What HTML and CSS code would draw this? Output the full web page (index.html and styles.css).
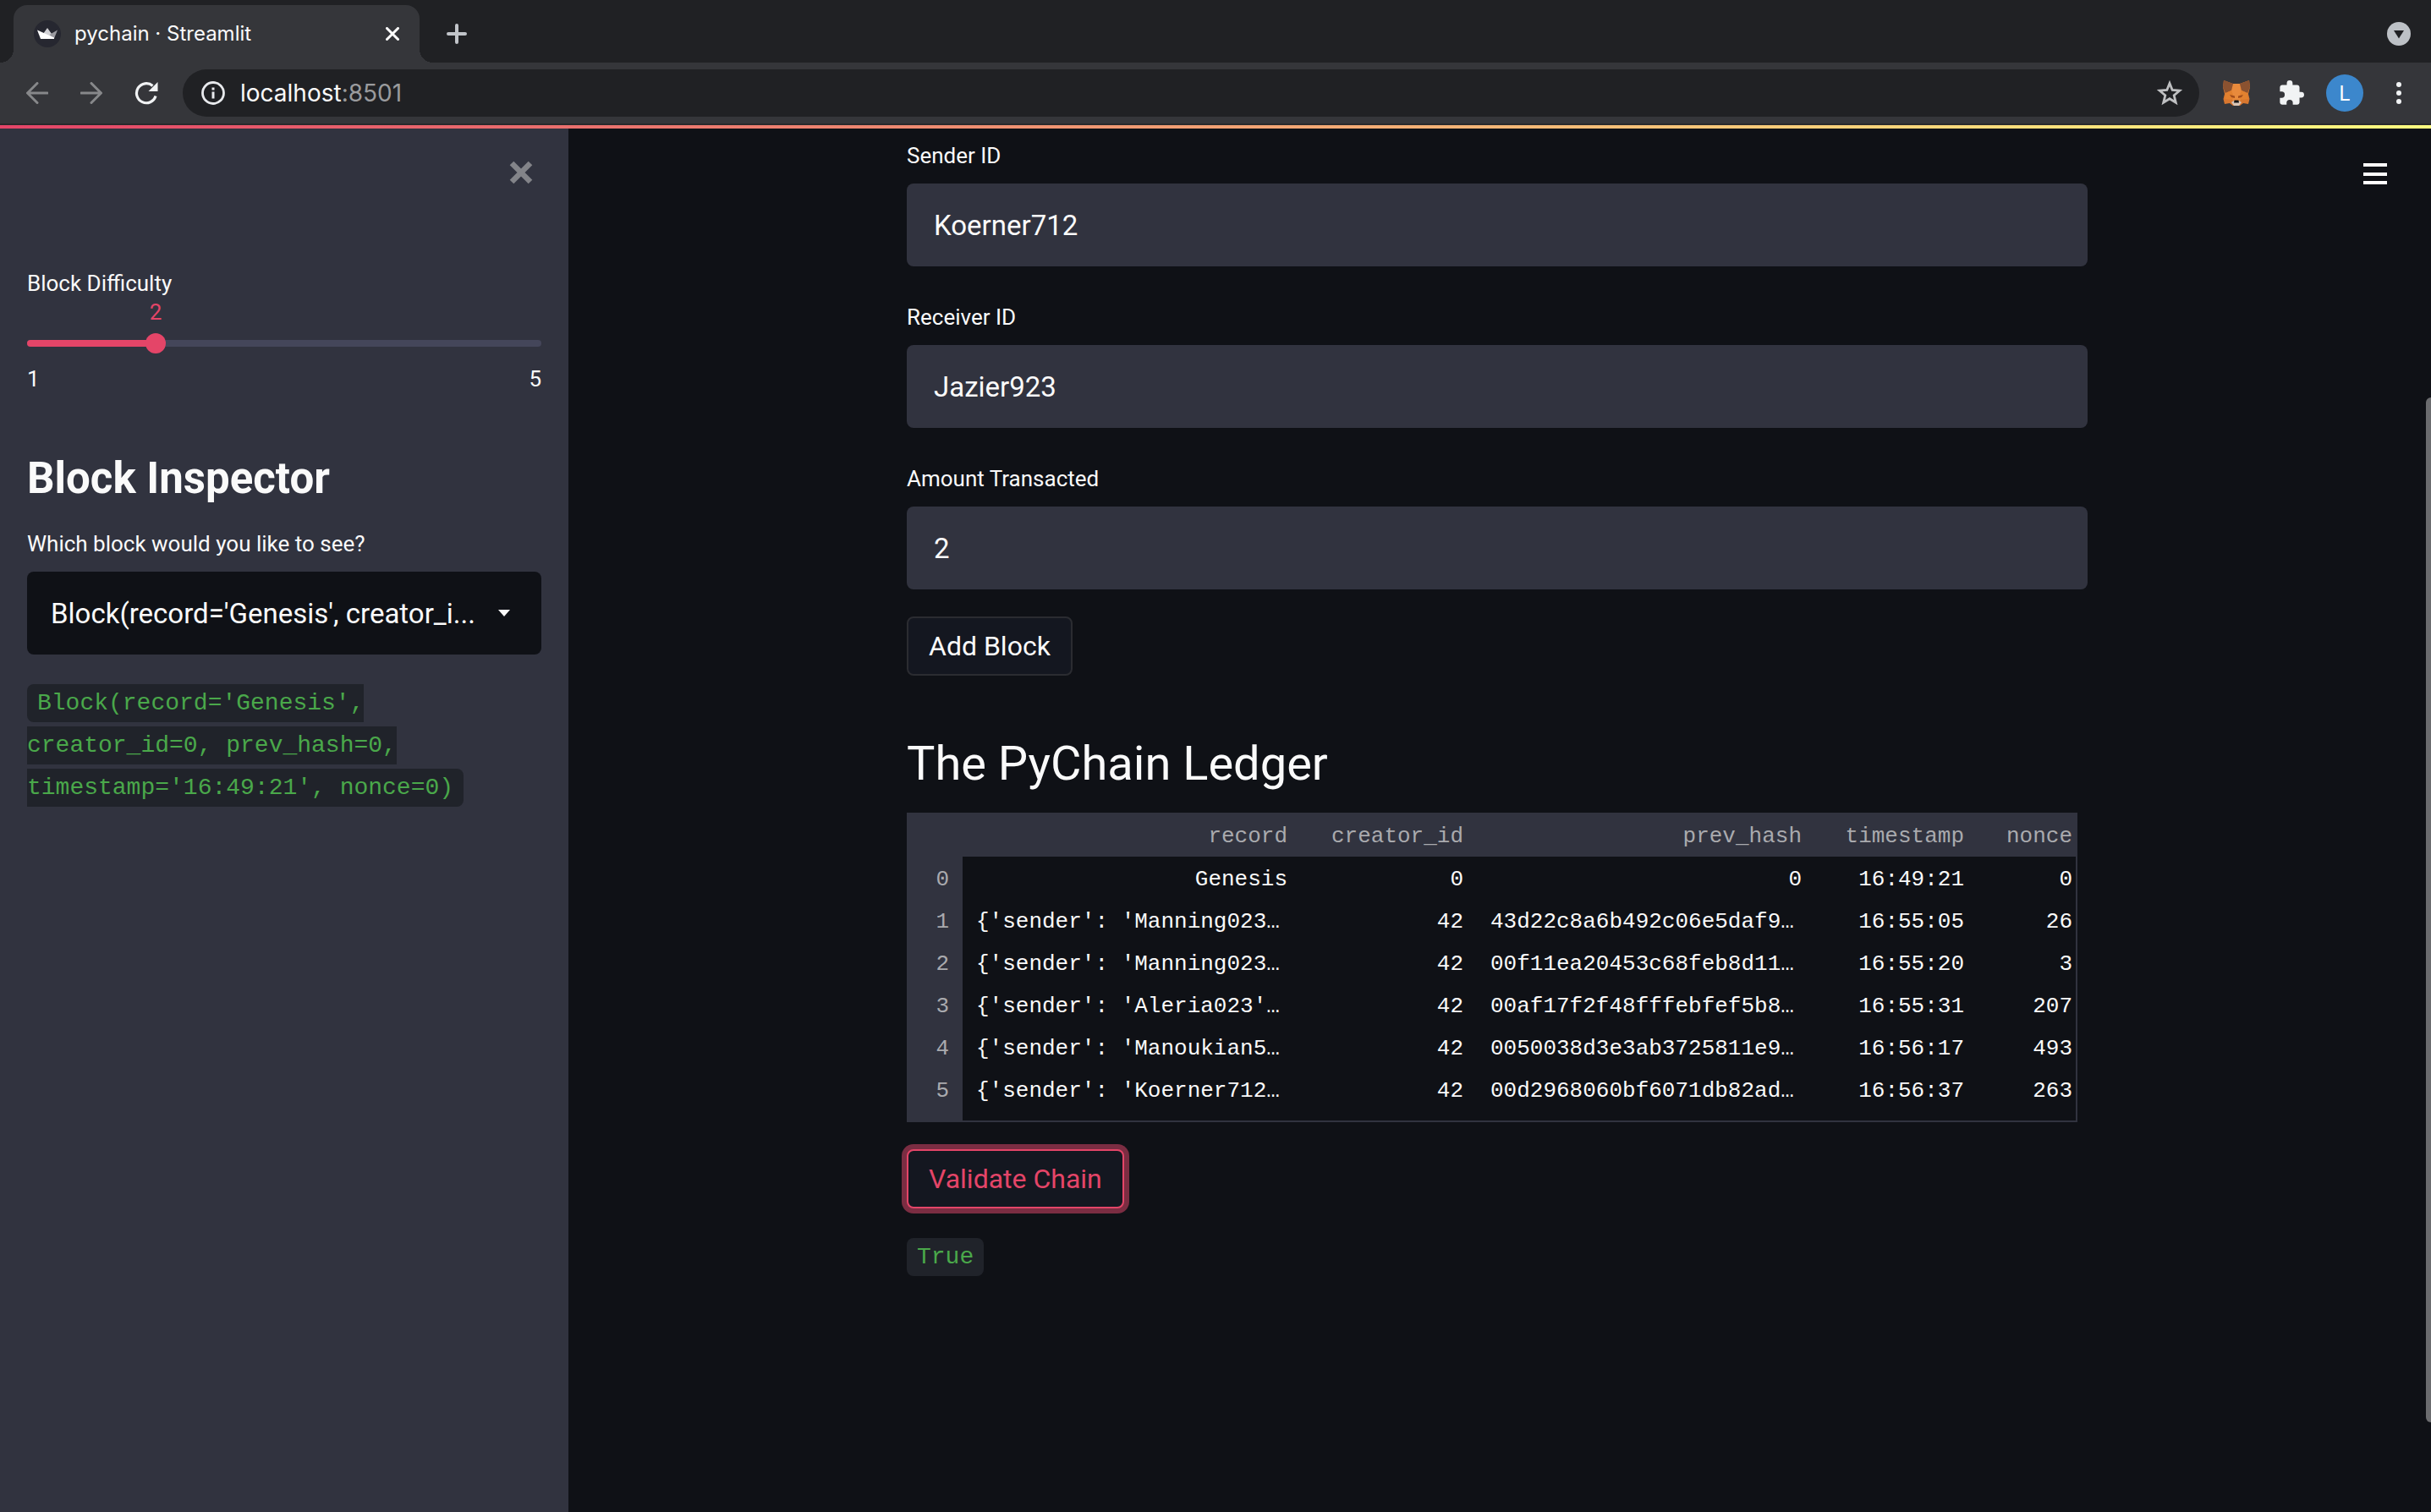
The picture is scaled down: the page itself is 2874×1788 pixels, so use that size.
FILE: index.html
```html
<!DOCTYPE html>
<html lang="en">
<head>
<meta charset="utf-8">
<title>pychain · Streamlit</title>
<link rel="stylesheet" href="styles.css">
</head>
<body>
<header class="browser">
  <div class="tabstrip">
    <div class="tab">
      <svg class="favicon" viewBox="0 0 32 32" aria-hidden="true">
        <circle cx="16" cy="16" r="16" fill="#262730"/>
        <path d="M11 16l5-7 5 7 1 4z" fill="#d2d2d6"/>
        <path d="M28 11.500L18.500 17l4.500 4.500h1z" fill="#9a9aa0"/>
        <path d="M4 11.500L24 20.500V22H8z" fill="#fff"/>
      </svg>
      <span class="tab-title">pychain · Streamlit</span>
      <button class="icon-button" aria-label="Close tab">
        <svg width="16" height="16" viewBox="0 0 16 16"><path d="M1.500 1.500l13 13M14.500 1.500l-13 13" stroke="#fff" stroke-width="3" stroke-linecap="round"/></svg>
      </button>
    </div>
    <button class="icon-button new-tab" aria-label="New tab">
      <svg width="24" height="24" viewBox="0 0 24 24"><path d="M12 2v20M2 12h20" stroke="#c1c4c9" stroke-width="4" stroke-linecap="round"/></svg>
    </button>
    <button class="icon-button tab-search" aria-label="Search tabs">
      <svg width="28" height="28" viewBox="0 0 28 28"><circle cx="14" cy="14" r="14" fill="#bdc1c6"/><path d="M8 10h12l-6 9.500z" fill="#202124"/></svg>
    </button>
  </div>
  <div class="toolbar">
    <div class="nav-buttons">
      <button class="icon-button" aria-label="Back"><svg width="26" height="26" viewBox="0 0 26 26" fill="none" stroke="#87888a" stroke-width="3" stroke-linecap="round" stroke-linejoin="round"><path d="M25 13H2M13 1.500L1.500 13 13 24.500"/></svg></button>
      <button class="icon-button" aria-label="Forward"><svg width="26" height="26" viewBox="0 0 26 26" fill="none" stroke="#87888a" stroke-width="3" stroke-linecap="round" stroke-linejoin="round"><path d="M1 13h23M13 1.500L24.500 13 13 24.500"/></svg></button>
      <button class="icon-button" aria-label="Reload"><svg width="28" height="28" viewBox="0 0 28 28"><path d="M21.500 5.500A11.500 11.500 0 1 0 25 17.500" fill="none" stroke="#f1f3f4" stroke-width="3.200"/><path d="M27.500 1v11h-11z" fill="#f1f3f4"/></svg></button>
    </div>
    <div class="omnibox">
      <svg width="28" height="28" viewBox="0 0 28 28" aria-hidden="true"><circle cx="14" cy="14" r="12.500" fill="none" stroke="#e8eaed" stroke-width="2.800"/><path d="M12.500 7.500h3v3h-3zM12.500 12.500h3v8h-3z" fill="#e8eaed"/></svg>
      <span class="url">localhost<span class="port">:8501</span></span>
      <button class="icon-button" aria-label="Bookmark this tab"><svg width="30" height="30" viewBox="0 0 30 30"><path d="M15 3.500l3.200 8 8.600.7-6.600 5.600 2.100 8.500-7.300-4.600-7.300 4.600 2.100-8.500-6.600-5.600 8.600-.7z" fill="none" stroke="#bfc0c2" stroke-width="2.800"/></svg></button>
    </div>
    <div class="actions">
      <button class="icon-button" aria-label="MetaMask"><svg width="32" height="30" viewBox="0 0 32 30">
        <path d="M1 0l11 4h8l11-4 1 8-2 8 1.500 6L30 28l-6-1-4 3h-8l-4-3-6 1L.500 22 2 16 0 8z" fill="#d8772f"/>
        <path d="M12 4h8l2 8-2 6 1 6H11l1-6-2-6z" fill="#e88a3c"/>
        <path d="M1 0l11 4-2 8-7 3-3-7zM31 0L20 4l2 8 7 3 3-7z" fill="#8b5230"/>
        <path d="M3 15l7-3 3 8-3 3-8-1zM29 15l-7-3-3 8 3 3 8-1z" fill="#e2812f"/>
        <path d="M8 17l6 1.500v2.500l-4-1zM24 17l-6 1.500v2.500l4-1z" fill="#a14d1c"/>
        <path d="M10 26l3-2h6l3 2-3 4h-6z" fill="#d8c5b6"/><path d="M13.500 23.500h5l.500 3h-6z" fill="#161616"/>
      </svg></button>
      <button class="icon-button" aria-label="Extensions"><svg width="30" height="30" viewBox="1 1 22 22"><path d="M20.500 11H19V7c0-1.100-.9-2-2-2h-4V3.500a2.500 2.500 0 0 0-5 0V5H4c-1.100 0-2 .9-2 2v3.800h1.500a2.700 2.700 0 0 1 0 5.400H2V20c0 1.100.9 2 2 2h3.800v-1.500a2.700 2.700 0 0 1 5.400 0V22H17c1.100 0 2-.9 2-2v-4h1.500a2.500 2.500 0 0 0 0-5z" fill="#f1f3f4"/></svg></button>
      <button class="avatar" aria-label="Profile">L</button>
      <button class="icon-button" aria-label="Browser menu"><svg width="8" height="28" viewBox="0 0 8 28" fill="#f1f3f4"><circle cx="4" cy="4" r="3"/><circle cx="4" cy="14" r="3"/><circle cx="4" cy="24" r="3"/></svg></button>
    </div>
  </div>
</header>
<div class="decoration"></div>
<div class="app">
  <aside class="sidebar">
    <button class="icon-button sidebar-close" aria-label="Close sidebar"><svg width="28" height="28" viewBox="0 0 28 28"><path d="M3 3l22 22M25 3L3 25" stroke="#838489" stroke-width="6.500"/></svg></button>
    <label class="label" for="difficulty">Block Difficulty</label>
    <output class="slider-value" for="difficulty" style="width: 50%">2</output>
    <div class="slider">
      <div class="track"><div class="fill" style="width: 25%"></div></div>
      <input class="range" id="difficulty" type="range" min="1" max="5" value="2">
    </div>
    <div class="ticks"><span>1</span><span>5</span></div>
    <h1 class="inspector-title">Block Inspector</h1>
    <label class="label" for="block">Which block would you like to see?</label>
    <div class="select-box">
      <select class="select" id="block"><option>Block(record='Genesis', creator_i...</option></select>
      <svg class="caret" width="14" height="8" viewBox="0 0 14 8" aria-hidden="true"><path d="M0 0h14L7 8z" fill="#fafafa"/></svg>
    </div>
    <p class="output-line"><code class="code">Block(record='Genesis', creator_id=0, prev_hash=0, timestamp='16:49:21', nonce=0)</code></p>
  </aside>
  <main class="main">
    <button class="icon-button menu" aria-label="Main menu"><svg width="28" height="26" viewBox="0 0 28 26" fill="#fff"><path d="M0 0h28v4H0zM0 11h28v4H0zM0 21h28v4H0z"/></svg></button>
    <div class="content">
      <div class="fields">
        <div class="field"><label class="label" for="sender">Sender ID</label><input class="text-input" id="sender" type="text" value="Koerner712"></div>
        <div class="field"><label class="label" for="receiver">Receiver ID</label><input class="text-input" id="receiver" type="text" value="Jazier923"></div>
        <div class="field"><label class="label" for="amount">Amount Transacted</label><input class="text-input" id="amount" type="text" value="2"></div>
      </div>
      <button class="button">Add Block</button>
      <h2 class="ledger-title">The PyChain Ledger</h2>
      <div class="ledger">
        <table class="table">
          <colgroup><col class="c-index"><col class="c-record"><col class="c-creator"><col class="c-hash"><col class="c-time"><col></colgroup>
          <thead><tr><th></th><th>record</th><th>creator_id</th><th>prev_hash</th><th>timestamp</th><th>nonce</th></tr></thead>
          <tbody>
            <tr><th>0</th><td>Genesis</td><td>0</td><td>0</td><td>16:49:21</td><td>0</td></tr>
            <tr><th>1</th><td class="long">{'sender': 'Manning023…</td><td>42</td><td class="long">43d22c8a6b492c06e5daf9…</td><td>16:55:05</td><td>26</td></tr>
            <tr><th>2</th><td class="long">{'sender': 'Manning023…</td><td>42</td><td class="long">00f11ea20453c68feb8d11…</td><td>16:55:20</td><td>3</td></tr>
            <tr><th>3</th><td class="long">{'sender': 'Aleria023'…</td><td>42</td><td class="long">00af17f2f48fffebfef5b8…</td><td>16:55:31</td><td>207</td></tr>
            <tr><th>4</th><td class="long">{'sender': 'Manoukian5…</td><td>42</td><td class="long">0050038d3e3ab3725811e9…</td><td>16:56:17</td><td>493</td></tr>
            <tr><th>5</th><td class="long">{'sender': 'Koerner712…</td><td>42</td><td class="long">00d2968060bf6071db82ad…</td><td>16:56:37</td><td>263</td></tr>
          </tbody>
        </table>
      </div>
      <button class="button focused">Validate Chain</button>
      <p class="output-line"><code class="code">True</code></p>
    </div>
    <div class="scrollbar"><div class="scroll-thumb"></div></div>
  </main>
</div>
</body>
</html>
```

FILE: styles.css
```css
* { box-sizing: border-box; }

body {
  margin: 0;
  min-height: 100vh;
  display: flex;
  flex-direction: column;
  background: #0f1116;
  color: #fafafa;
  font-family: Roboto, "Liberation Sans", sans-serif;
  font-size: 32px;
}

button, input, select { font: inherit; color: inherit; }
svg { display: block; flex: none; }

.icon-button {
  display: flex;
  align-items: center;
  justify-content: center;
  padding: 0;
  border: 0;
  background: none;
}

/* Browser frame */
.browser { font-family: Inter, "Liberation Sans", sans-serif; }

.tabstrip {
  display: flex;
  align-items: center;
  height: 74px;
  padding: 0 24px 0 16px;
  background: #202124;
}

.tab {
  position: relative;
  display: flex;
  align-items: center;
  align-self: flex-end;
  width: 480px;
  height: 68px;
  padding: 0 24px;
  border-radius: 16px 16px 0 0;
  background: #35363a;
}

/* Flared feet that join the tab to the toolbar */
.tab::before, .tab::after {
  content: "";
  position: absolute;
  bottom: 0;
  width: 16px;
  height: 16px;
}
.tab::before { left: -16px; background: radial-gradient(circle at 0 0, #202124 16px, #35363a 16px); }
.tab::after { right: -16px; background: radial-gradient(circle at 100% 0, #202124 16px, #35363a 16px); }

.favicon { width: 32px; height: 32px; }
.tab-title { flex: 1; margin-left: 16px; font-size: 24px; line-height: 32px; }
.new-tab { margin: 6px auto 0 32px; }
.tab-search { margin-top: 6px; }

.toolbar {
  display: flex;
  align-items: center;
  height: 74px;
  padding: 0 34px 0 31px;
  background: #35363a;
  border-bottom: 2px solid #28292c;
}

.nav-buttons { display: flex; align-items: center; gap: 38px; margin-right: 29px; }

.omnibox {
  flex: 1;
  display: flex;
  align-items: center;
  height: 56px;
  padding: 0 20px 0 22px;
  border-radius: 28px;
  background: #202124;
}
.url { flex: 1; margin-left: 18px; font-size: 28px; line-height: 36px; }
.port { color: #9a9b9d; }

.actions { display: flex; align-items: center; margin-left: 28px; gap: 34px; }
.actions .avatar {
  width: 44px;
  height: 44px;
  margin: 0 4px 0 -8px;
  padding: 0;
  border: 0;
  border-radius: 50%;
  background: #3c87cc;
  color: #fff;
  font-size: 24px;
}

.decoration { height: 4px; background: linear-gradient(90deg, #e44568, #fffd80); }

/* Application */
.app { flex: 1; display: flex; }

.sidebar {
  display: flex;
  flex-direction: column;
  flex: none;
  width: 672px;
  padding: 38px 32px;
  background: #31333f;
}
.sidebar-close { align-self: flex-end; margin: 0 10px 96px 0; }

.label { display: block; font-size: 26px; line-height: 42px; }

.slider-value { text-align: center; font-size: 26px; line-height: 26px; color: #e44568; }
.slider { display: grid; align-items: center; margin-top: 12px; }
.track, .range { grid-area: 1 / 1; }
.track { height: 8px; border-radius: 4px; overflow: hidden; background: #44465a; }
.fill { height: 100%; background: #e44568; }

/* The input overhangs by half a thumb so the thumb centre meets the track ends */
.range {
  appearance: none;
  height: 24px;
  margin: 0 -12px;
  background: none;
}
.range::-webkit-slider-thumb {
  appearance: none;
  width: 24px;
  height: 24px;
  border-radius: 50%;
  background: #e44568;
}
.range::-moz-range-thumb {
  width: 24px;
  height: 24px;
  border: 0;
  border-radius: 50%;
  background: #e44568;
}

.ticks { display: flex; justify-content: space-between; margin-top: 12px; font-size: 26px; line-height: 36px; }

.inspector-title { margin: 68px 0 24px; font-size: 51px; line-height: 64px; font-weight: 700; }

.select-box { display: grid; align-items: center; margin-top: 12px; }
.select, .caret { grid-area: 1 / 1; }
.select {
  appearance: none;
  width: 100%;
  height: 98px;
  padding: 0 60px 0 28px;
  border: 0;
  border-radius: 8px;
  background: #0f1116;
  font-size: 33px;
}
.caret { justify-self: end; margin-right: 37px; pointer-events: none; }

.output-line {
  margin: 33px 0 0;
  font-family: "Liberation Mono", monospace;
  font-size: 28px;
  line-height: 50px;
}
.code {
  padding: 7px 12px;
  border-radius: 8px;
  background: #20232a;
  color: #4aa84a;
  font: inherit;
}

.main {
  position: relative;
  flex: 1;
  display: flex;
}
.menu { position: absolute; top: 41px; right: 52px; }

.content {
  width: 100%;
  max-width: 1460px;
  margin: 0 auto;
  padding: 11px 32px 96px;
}

.fields { display: grid; gap: 39px; margin-bottom: 32px; }
.text-input {
  display: block;
  width: 100%;
  height: 98px;
  margin-top: 12px;
  padding: 0 32px;
  border: 0;
  border-radius: 8px;
  background: #31333f;
  font-size: 33px;
}

.button {
  display: block;
  height: 70px;
  padding: 0 24px;
  border: 2px solid #2b2c31;
  border-radius: 8px;
  background: #141720;
}
.focused {
  margin-top: 32px;
  border-color: #e44568;
  color: #e44568;
  box-shadow: 0 0 0 6px #7b2d42;
}

.ledger-title { margin: 70px 0 24px; font-size: 56px; line-height: 68px; font-weight: 400; }

/* The index column continues below the last row to the frame */
.ledger {
  max-width: 1384px;
  padding-bottom: 12px;
  border: solid #31333f;
  border-width: 0 2px 2px 0;
  background: linear-gradient(#31333f, #31333f) 0 0 / 66px 100% no-repeat;
}
.table {
  width: 100%;
  table-layout: fixed;
  border-collapse: collapse;
  font-family: "Liberation Mono", monospace;
  font-size: 26px;
  line-height: 46px;
}
.table th, .table td {
  height: 50px;
  padding: 4px 16px 0 0;
  text-align: right;
  font-weight: 400;
  white-space: nowrap;
}
.table th { color: #a9aaae; }
.table thead th { height: 52px; background: #31333f; }
.table th:last-child, .table td:last-child { padding-right: 4px; }
.table .long { padding-left: 16px; text-align: left; }
.c-index { width: 66px; }
.c-record { width: 400px; }
.c-creator { width: 208px; }
.c-hash { width: 400px; }
.c-time { width: 192px; }

.scrollbar { flex: none; width: 6px; padding-top: 318px; }
.scroll-thumb { height: 1212px; border-radius: 6px 0 0 6px; background: #6b6c6f; }
```
